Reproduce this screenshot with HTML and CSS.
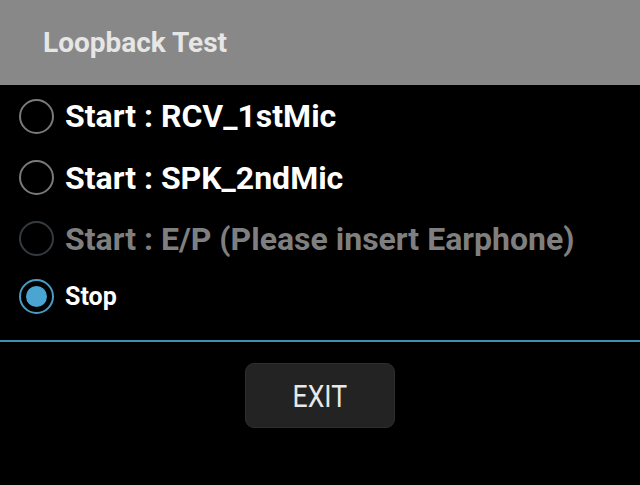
FILE: index.html
```html
<!DOCTYPE html>
<html>
<head>
    <meta charset="UTF-8">
    <title>Loopback Test</title>
    <link rel="stylesheet" href="styles.css">
</head>
<body>
    <div class="title-bar">
        <h1>Loopback Test</h1>
    </div>

    <div class="options">
        <label class="option">
            <span class="radio"></span>
            <span class="option-text">Start : RCV_1stMic</span>
        </label>
        <label class="option">
            <span class="radio"></span>
            <span class="option-text">Start : SPK_2ndMic</span>
        </label>
        <label class="option disabled">
            <span class="radio"></span>
            <span class="option-text">Start : E/P (Please insert Earphone)</span>
        </label>
        <label class="option small checked">
            <span class="radio"></span>
            <span class="option-text">Stop</span>
        </label>
    </div>

    <div class="divider"></div>

    <div class="actions">
        <button class="exit-button"><span>EXIT</span></button>
    </div>
</body>
</html>
```

FILE: styles.css
```css
body {
    font-family: Roboto, "Noto Sans", sans-serif;
    margin: 0;
    background-color: #000;
    color: #fff;
    width: 640px;
    height: 485px;
    overflow: hidden;
}

.title-bar {
    background-color: #888888;
    height: 85px;
    display: flex;
    align-items: center;
    padding-left: 43px;
    box-sizing: border-box;
}

h1 {
    margin: 0;
    font-size: 28px;
    font-weight: bold;
    color: #e6e6e6;
}

.option {
    display: flex;
    align-items: center;
    height: 61px;
    padding-left: 19px;
}

.option:first-child {
    height: 62px;
}

.option.small {
    height: 55px;
}

.radio {
    width: 31px;
    height: 31px;
    border: 2.5px solid #7a7a7a;
    border-radius: 50%;
    margin-right: 11px;
    position: relative;
    flex-shrink: 0;
}

.option-text {
    font-size: 32px;
    font-weight: bold;
}

.option.small .option-text {
    font-size: 25px;
}

.option.disabled .radio {
    border-color: #363b3f;
}

.option.disabled .option-text {
    color: #7f7f7f;
}

.option.checked .radio {
    border-color: #4b9cc2;
}

.option.checked .radio::after {
    content: "";
    position: absolute;
    left: 5px;
    top: 5px;
    width: 21px;
    height: 21px;
    border-radius: 50%;
    background-color: #4aa5d3;
}

.divider {
    height: 2px;
    background-color: #3e8fb2;
    margin-top: 16px;
}

.actions {
    display: flex;
    justify-content: center;
    padding-top: 21px;
}

.exit-button {
    width: 150px;
    height: 65px;
    background-color: #232323;
    border: 1px solid #2e2e2e;
    border-radius: 9px;
    color: #e8e8e8;
    font-family: Roboto, "Noto Sans", sans-serif;
    font-size: 32px;
    padding: 0;
}

.exit-button span {
    display: inline-block;
    transform: scaleX(0.83);
}
```
